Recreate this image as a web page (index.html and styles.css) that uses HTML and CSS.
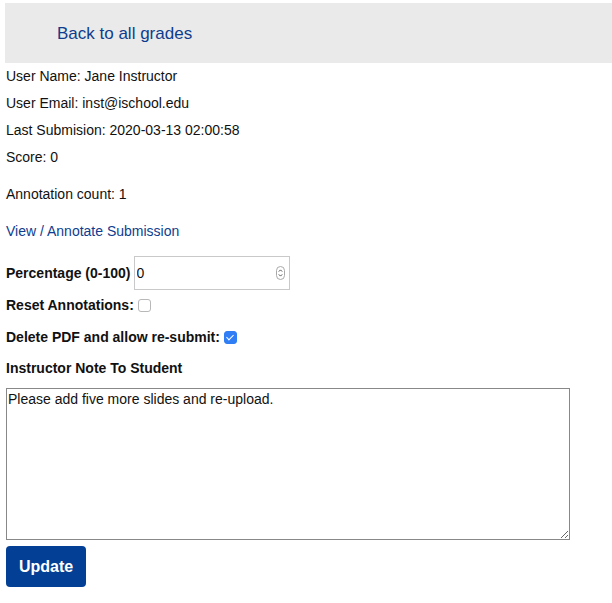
FILE: index.html
```html
<!DOCTYPE html>
<html>
<head>
<meta charset="utf-8">
<link rel="stylesheet" href="styles.css">
</head>
<body>
<div class="topbar"><a class="back" href="#">Back to all grades</a></div>
<div class="info">
  <p class="line">User Name: Jane Instructor</p>
  <p class="line">User Email: inst@ischool.edu</p>
  <p class="line">Last Submision: 2020-03-13 02:00:58</p>
  <p class="line">Score: 0</p>
</div>
<p class="count">Annotation count: 1</p>
<p class="view"><a href="#">View / Annotate Submission</a></p>
<form class="form">
  <div class="row pct"><label class="lbl">Percentage (0-100)</label>
    <span class="numwrap"><input class="num" type="number" value="0"><span class="spin"><svg width="9" height="14" viewBox="0 0 9 14"><rect x="0.5" y="0.5" width="8" height="13" rx="4" fill="#fff" stroke="#a8a8a8"/><path d="M2.8 5.6 L4.5 3.9 L6.2 5.6" fill="none" stroke="#555" stroke-width="1"/><path d="M2.8 8.4 L4.5 10.1 L6.2 8.4" fill="none" stroke="#555" stroke-width="1"/></svg></span></span>
  </div>
  <div class="row r2"><label class="lbl">Reset Annotations:</label><input class="cb" type="checkbox"></div>
  <div class="row r3"><label class="lbl">Delete PDF and allow re-submit:</label><input class="cb" type="checkbox" checked></div>
  <div class="row note"><label class="lbl">Instructor Note To Student</label></div>
  <textarea class="ta">Please add five more slides and re-upload.</textarea>
  <button class="btn" type="button">Update</button>
</form>
</body>
</html>
```
FILE: styles.css
```css
html, body { margin: 0; padding: 0; background: #fff; }
body {
  padding: 3px 0 0 6px;
  font-family: "Liberation Sans", Arial, sans-serif;
  font-size: 14px;
  color: #111;
}
a { color: #0e3d8f; text-decoration: none; }
.topbar {
  background: #eaeaea;
  height: 60px;
  box-sizing: border-box;
  display: flex;
  align-items: center;
  padding: 2px 0 0 52px;
  margin-left: -1px;
}
.back { font-size: 17px; }
.info { display: flex; flex-direction: column; gap: 10px; margin-top: 5px; }
.line { margin: 0; line-height: 17px; }
.count { margin: 20px 0 0; line-height: 17px; }
.view { margin: 20px 0 0; line-height: 17px; }
.form { display: flex; flex-direction: column; align-items: flex-start; }
.row { display: flex; align-items: center; }
.lbl { font-weight: bold; }
.pct { margin-top: 16px; }
.numwrap { position: relative; display: inline-block; margin-left: 3px; }
.num {
  display: block;
  margin: 0;
  width: 156px; height: 34px; box-sizing: border-box;
  border: 1px solid #c9c9c9; border-radius: 0;
  font: 14px "Liberation Sans", Arial, sans-serif;
  color: #111;
  padding: 0 2px;
  outline: none;
  -moz-appearance: textfield;
}
.num::-webkit-inner-spin-button, .num::-webkit-outer-spin-button { -webkit-appearance: none; margin: 0; }
.spin { position: absolute; right: 5px; top: 10px; line-height: 0; }
.cb {
  -webkit-appearance: none; appearance: none;
  margin: 0 0 0 4px; width: 13px; height: 13px;
  border: 1px solid #b8b8b8; border-radius: 3px;
  background: #fff; box-sizing: border-box;
  position: relative;
}
.cb:checked { background: #2f7ef5; border-color: #2f7ef5; }
.cb:checked::after {
  content: "";
  position: absolute;
  left: 3.5px; top: 1px;
  width: 3px; height: 6px;
  border: solid #fff;
  border-width: 0 1.6px 1.6px 0;
  transform: rotate(45deg);
}
.r2 { margin-top: 7px; }
.r3 { margin-top: 16px; }
.note { margin-top: 15px; line-height: 17px; }
.ta {
  margin-top: 11px;
  width: 564px; height: 152px; box-sizing: border-box;
  border: 1px solid #888;
  font: 14px "Liberation Sans", Arial, sans-serif;
  color: #111;
  padding: 2px 1px;
  resize: both;
  outline: none;
}
.btn {
  margin-top: 6px;
  width: 80px; height: 41px;
  background: #033f94; color: #fff;
  border: none; border-radius: 4px;
  font: bold 16px "Liberation Sans", Arial, sans-serif;
}
```
